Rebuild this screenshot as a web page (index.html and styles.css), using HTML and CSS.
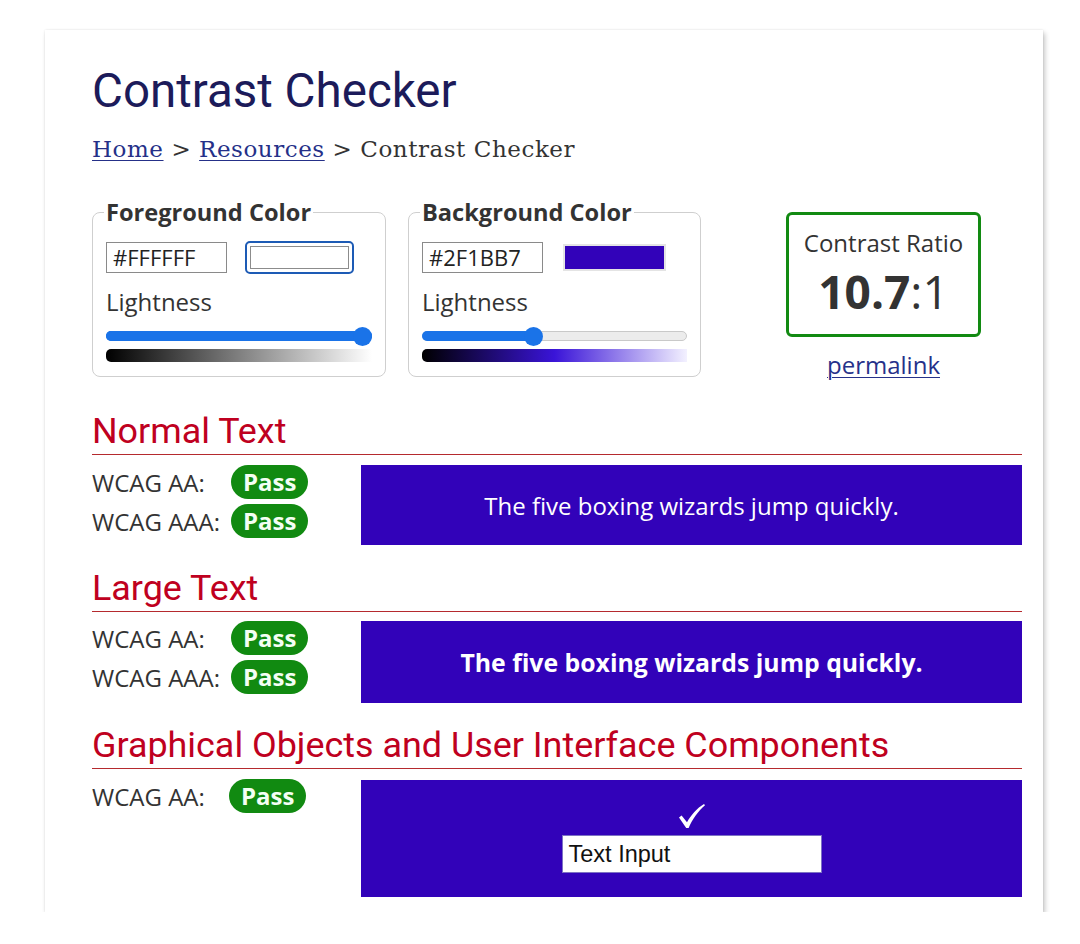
FILE: index.html
```html
<!DOCTYPE html>
<html lang="en">
<head>
<meta charset="utf-8">
<title>Contrast Checker</title>
<link rel="stylesheet" href="styles.css">
</head>
<body>
<div class="card">
  <h1 class="title">Contrast Checker</h1>
  <nav class="crumbs"><a href="#">Home</a> &gt; <a href="#">Resources</a> &gt; Contrast Checker</nav>

  <div class="top">
    <fieldset class="picker picker-fg">
      <legend>Foreground Color</legend>
      <div class="inputs">
        <div class="hex">#FFFFFF</div>
        <div class="swatch swatch-focused"><div class="swatch-fill fill-white"></div></div>
      </div>
      <div class="label">Lightness</div>
      <div class="slider">
        <div class="track">
          <div class="fill" style="width:100%"></div>
          <div class="thumb" style="left:96.6%"></div>
        </div>
      </div>
      <div class="grad grad-fg"></div>
    </fieldset>

    <fieldset class="picker picker-bg">
      <legend>Background Color</legend>
      <div class="inputs">
        <div class="hex">#2F1BB7</div>
        <div class="swatch"><div class="swatch-fill fill-purple"></div></div>
      </div>
      <div class="label">Lightness</div>
      <div class="slider">
        <div class="track track-empty">
          <div class="fill" style="width:41.9%"></div>
          <div class="thumb" style="left:41.9%"></div>
        </div>
      </div>
      <div class="grad grad-bg"></div>
    </fieldset>

    <div class="ratio-col">
      <div class="ratio-box">
        <div class="ratio-label">Contrast Ratio</div>
        <div class="ratio-value"><b>10.7</b>:1</div>
      </div>
      <a class="permalink" href="#">permalink</a>
    </div>
  </div>

  <section class="block block-first">
    <h2 class="sec-title">Normal Text</h2>
    <div class="sec-body">
      <div class="results">
        <div class="result"><span class="lvl">WCAG AA:</span><span class="pass">Pass</span></div>
        <div class="result"><span class="lvl">WCAG AAA:</span><span class="pass">Pass</span></div>
      </div>
      <div class="preview preview-normal">The five boxing wizards jump quickly.</div>
    </div>
  </section>

  <section class="block block-large">
    <h2 class="sec-title">Large Text</h2>
    <div class="sec-body sec-body-large">
      <div class="results">
        <div class="result"><span class="lvl">WCAG AA:</span><span class="pass">Pass</span></div>
        <div class="result"><span class="lvl">WCAG AAA:</span><span class="pass">Pass</span></div>
      </div>
      <div class="preview preview-large">The five boxing wizards jump quickly.</div>
    </div>
  </section>

  <section class="block block-ui">
    <h2 class="sec-title">Graphical Objects and User Interface Components</h2>
    <div class="sec-body sec-body-ui">
      <div class="results">
        <div class="result result-ui"><span class="lvl lvl-ui">WCAG AA:</span><span class="pass">Pass</span></div>
      </div>
      <div class="preview preview-ui">
        <svg class="check" width="26" height="24" viewBox="0 0 26 24" aria-hidden="true">
          <path d="M0 13.6 L2.6 11.6 L8 18.2 C12 11 18 4.2 25 0 L26 1.2 C19.2 7 13.4 15 9.6 24 L7.2 24 Z" fill="#ffffff"/>
        </svg>
        <div class="text-input">Text Input</div>
      </div>
    </div>
  </section>
</div>
</body>
</html>
```

FILE: styles.css
```css
html, body {
  margin: 0;
  padding: 0;
  background: #ffffff;
}

body {
  font-family: "Open Sans", "Noto Sans", sans-serif;
  color: #333333;
}

.card {
  box-sizing: border-box;
  width: 998px;
  margin: 30px 0 0 45px;
  padding: 33px 21px 15px 47px;
  background: #ffffff;
  box-shadow: 2px 3px 5px rgba(0, 0, 0, 0.22), 0 0 2px rgba(0, 0, 0, 0.1);
}

.title {
  margin: 0;
  font-family: Roboto, "Liberation Sans", sans-serif;
  font-weight: 400;
  font-size: 47.5px;
  line-height: 56px;
  color: #1c1b5a;
}

.crumbs {
  margin-top: 15px;
  font-family: "DejaVu Serif", "Liberation Serif", serif;
  font-size: 23px;
  line-height: 30px;
  letter-spacing: 0.55px;
  color: #333333;
}

.crumbs a {
  color: #253088;
  text-decoration: underline;
  text-underline-offset: 3px;
  text-decoration-thickness: 1px;
}

.top {
  display: flex;
  align-items: flex-start;
  margin-top: 33px;
}

.picker {
  box-sizing: border-box;
  margin: 0;
  padding: 13px 13px 14px 13px;
  border: 1px solid #cfcfcf;
  border-radius: 8px;
  min-width: 0;
}

.picker-fg {
  width: 294px;
}

.picker-bg {
  width: 293px;
  margin-left: 22px;
}

.picker legend {
  padding: 0 2px;
  margin-left: -2px;
  font-weight: 700;
  font-size: 23.6px;
  line-height: 31px;
  color: #333333;
}

.inputs {
  display: flex;
  align-items: center;
  height: 33px;
}

.hex {
  box-sizing: border-box;
  width: 121px;
  height: 31px;
  padding-left: 6px;
  border: 1px solid #8a8a8a;
  font-size: 22px;
  line-height: 29px;
  color: #222222;
  background: #ffffff;
}

.swatch {
  box-sizing: border-box;
  width: 109px;
  height: 33px;
  margin-left: 18px;
  padding: 3px;
  border: 2px solid transparent;
  border-radius: 5px;
}

.picker-bg .swatch {
  margin-left: 17px;
}

.swatch-focused {
  border-color: #1d5bb5;
}

.swatch-fill {
  box-sizing: border-box;
  width: 100%;
  height: 100%;
}

.fill-white {
  background: #ffffff;
  border: 1px solid #8c8c8c;
}

.fill-purple {
  background: #3202b9;
  box-shadow: 0 0 0 2px #e4e4e4;
}

.label {
  margin-top: 12px;
  font-size: 24px;
  line-height: 31px;
  color: #333333;
}

.slider {
  display: flex;
  align-items: center;
  height: 20px;
  margin-top: 9px;
}

.track {
  position: relative;
  box-sizing: border-box;
  width: 100%;
  height: 10px;
  border-radius: 5px;
  background: #1a73e8;
}

.track-empty {
  background: #ececec;
  border: 1px solid #c9c9c9;
}

.fill {
  height: 100%;
  border-radius: 5px;
  background: #1a73e8;
}

.track-empty .fill {
  margin-top: -1px;
  margin-left: -1px;
  height: 10px;
}

.thumb {
  position: absolute;
  top: 50%;
  width: 19px;
  height: 19px;
  margin: -9.5px 0 0 -9.5px;
  border-radius: 50%;
  background: #1a73e8;
}

.grad {
  height: 13px;
  margin-top: 3px;
  border-radius: 5px 0 0 5px;
}

.grad-fg {
  background: linear-gradient(to right, #000000 0%, #ffffff 100%);
}

.grad-bg {
  background: linear-gradient(to right, #000000 0%, #3a14d8 50%, #f3f1ff 100%);
}

.ratio-col {
  width: 277px;
  margin-left: 44px;
  margin-top: 15px;
  display: flex;
  flex-direction: column;
  align-items: center;
}

.ratio-box {
  box-sizing: border-box;
  width: 195px;
  height: 125px;
  padding-top: 12px;
  border: 3px solid #128a12;
  border-radius: 6px;
  text-align: center;
}

.ratio-label {
  font-size: 24px;
  line-height: 31px;
  color: #333333;
}

.ratio-value {
  margin-top: 8px;
  font-size: 46px;
  line-height: 50px;
  font-weight: 400;
  color: #333333;
}

.ratio-value b {
  font-weight: 700;
}

.permalink {
  margin-top: 16px;
  font-size: 24px;
  line-height: 24px;
  color: #26318a;
  text-decoration: underline;
  text-underline-offset: 3px;
  text-decoration-thickness: 1px;
}

.block {
  margin-top: 23px;
}

.block-first {
  margin-top: 34px;
}

.block-ui {
  margin-top: 22px;
}

.sec-title {
  margin: 0;
  padding-bottom: 3px;
  border-bottom: 1px solid #b52a2e;
  font-family: Roboto, "Liberation Sans", sans-serif;
  font-weight: 400;
  font-size: 35.9px;
  line-height: 40px;
  color: #bf0020;
}

.sec-body {
  display: flex;
  align-items: flex-start;
  margin-top: 10px;
}

.sec-body-large {
  margin-top: 9px;
}

.sec-body-ui {
  margin-top: 11px;
}

.results {
  width: 269px;
  flex: 0 0 269px;
  display: flex;
  flex-direction: column;
  gap: 5px;
}

.result {
  display: flex;
  align-items: center;
  height: 34px;
}

.result-ui {
  margin-top: -1px;
}

.lvl {
  width: 139px;
  font-size: 24px;
  line-height: 31px;
  color: #333333;
}

.lvl-ui {
  width: 137px;
}

.pass {
  box-sizing: border-box;
  height: 34px;
  padding: 0 12px;
  border-radius: 17px;
  background: #118a11;
  color: #f4fff4;
  font-weight: 700;
  font-size: 24px;
  line-height: 34px;
}

.preview {
  flex: 1;
  display: flex;
  align-items: center;
  justify-content: center;
  background: #3202b9;
  color: #ffffff;
  font-size: 24px;
}

.preview-normal {
  height: 80px;
}

.preview-large {
  height: 82px;
  font-weight: 700;
  font-size: 24.8px;
}

.preview-ui {
  height: 117px;
  flex-direction: column;
}

.check {
  display: block;
  margin-bottom: 7px;
}

.text-input {
  box-sizing: border-box;
  width: 260px;
  height: 38px;
  padding-left: 6px;
  border: 1px solid #7d72c4;
  background: #ffffff;
  color: #111111;
  font-family: "Liberation Sans", Arial, sans-serif;
  font-size: 23.5px;
  line-height: 36px;
}
```
